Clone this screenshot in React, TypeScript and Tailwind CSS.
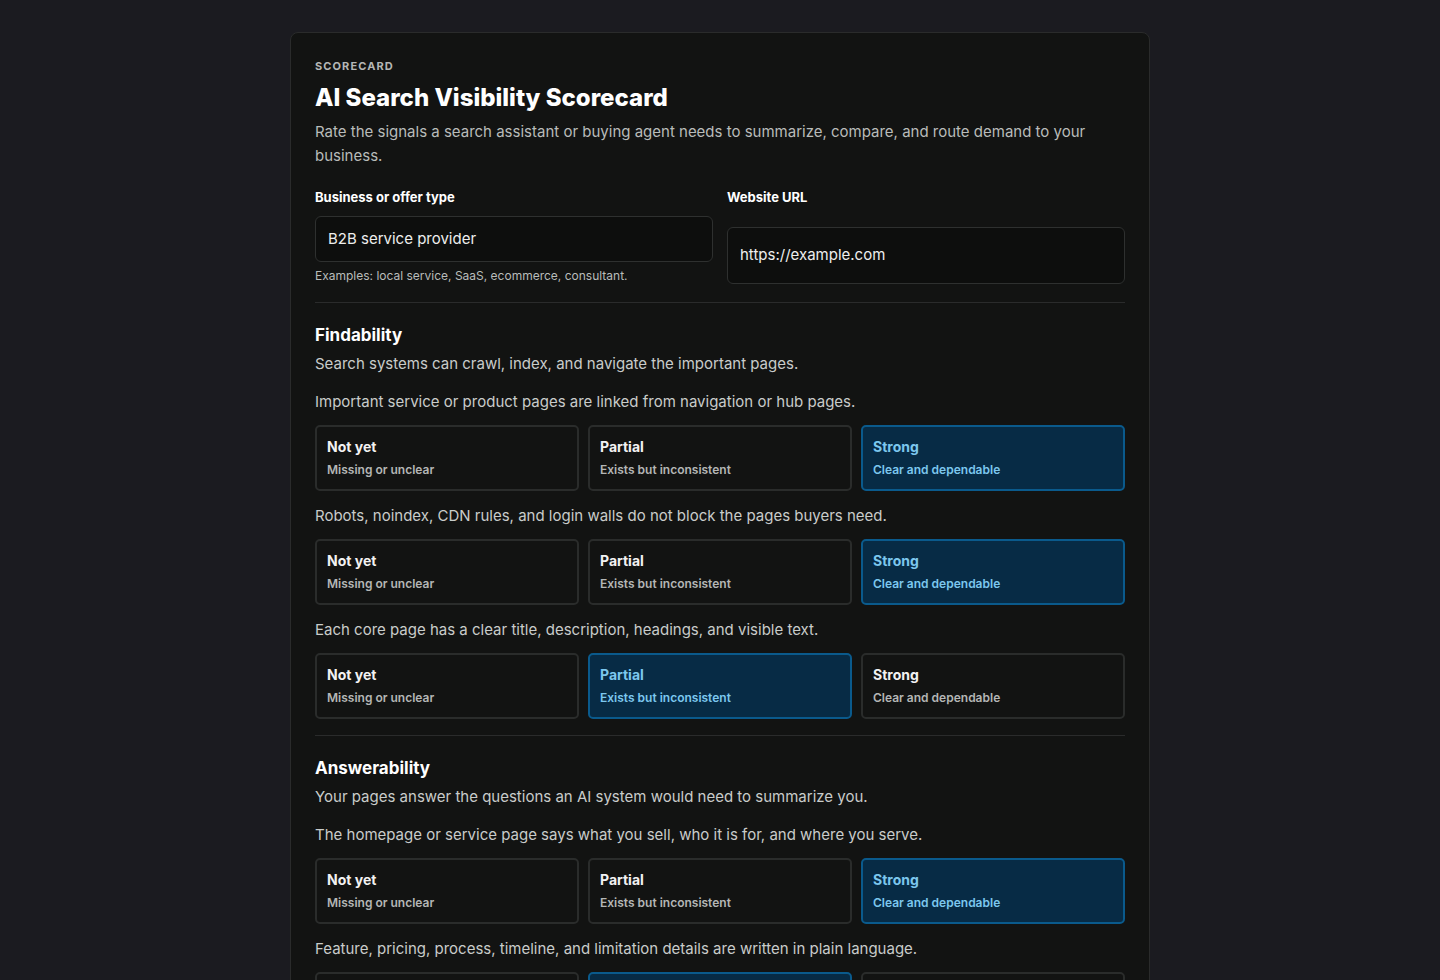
import React from "react";

type Q = { text: string; sel: number };
const opts = [
  ["Not yet", "Missing or unclear"],
  ["Partial", "Exists but inconsistent"],
  ["Strong", "Clear and dependable"],
];

function Question({ q }: { q: Q }) {
  return (
    <div className="flex flex-col gap-[12px]">
      <p className="text-[15px] text-[#c9ccca] leading-[22px]">{q.text}</p>
      <div className="grid grid-cols-3 gap-[9px]">
        {opts.map((o, i) => {
          const s = i === q.sel;
          return (
            <div
              key={i}
              className={`h-[66px] rounded-[5px] border-2 px-[10px] flex flex-col justify-center gap-[6px] ${
                s ? "bg-[#072b45] border-[#0a5a8c]" : "bg-[#121312] border-[#2a2c2b]"
              }`}
            >
              <div className={`text-[14px] font-bold leading-[18px] ${s ? "text-[#7cc7ee]" : "text-[#f2f2f2]"}`}>{o[0]}</div>
              <div className={`text-[12px] font-semibold leading-[16px] ${s ? "text-[#7cc7ee]" : "text-[#b4b6b5]"}`}>{o[1]}</div>
            </div>
          );
        })}
      </div>
    </div>
  );
}

function Section({ title, desc, qs }: { title: string; desc: string; qs: Q[] }) {
  return (
    <div className="flex flex-col">
      <h2 className="text-[17px] font-bold text-white leading-[24px]">{title}</h2>
      <p className="mt-[6px] text-[15px] text-[#c9ccca] leading-[22px]">{desc}</p>
      <div className="mt-[16px] flex flex-col gap-[14px]">
        {qs.map((q, i) => (
          <Question key={i} q={q} />
        ))}
      </div>
    </div>
  );
}

export default function App() {
  return (
    <div className="min-h-[980px] bg-[#1b1b20] pt-[32px] flex justify-center" style={{ fontFamily: "Inter, 'Noto Sans', sans-serif" }}>
      <div className="w-[860px] bg-[#121312] border border-[#2a2b2b] rounded-t-[8px] px-[24px] pt-[26px] pb-[40px] self-start">
        <div className="text-[11px] font-bold tracking-[0.1em] text-[#b5b7b6] leading-[14px]">SCORECARD</div>
        <h1 className="mt-[10px] text-[24px] font-extrabold text-white leading-[30px]">AI Search Visibility Scorecard</h1>
        <p className="mt-[7px] text-[15px] text-[#b9bcba] leading-[24px]">
          Rate the signals a search assistant or buying agent needs to summarize, compare, and route demand to your business.
        </p>
        <div className="mt-[20px] grid grid-cols-2 gap-[14px]">
          <div className="flex flex-col">
            <label className="text-[13px] font-bold text-white leading-[18px]">Business or offer type</label>
            <div className="mt-[10px] h-[46px] rounded-[6px] border border-[#2e302f] bg-[#0d0e0d] px-[12px] flex items-center text-[15px] text-[#eee]">B2B service provider</div>
            <div className="mt-[6px] text-[12px] text-[#b9bcba] leading-[16px]">Examples: local service, SaaS, ecommerce, consultant.</div>
          </div>
          <div className="flex flex-col">
            <label className="text-[13px] font-bold text-white leading-[18px]">Website URL</label>
            <div className="mt-[21px] flex-1 rounded-[6px] border border-[#2e302f] bg-[#0d0e0d] px-[12px] flex items-center text-[15px] text-[#eee]">https://example.com</div>
          </div>
        </div>
        <div className="mt-[18px] border-t border-[#2a2b2b] pt-[20px]">
          <Section
            title="Findability"
            desc="Search systems can crawl, index, and navigate the important pages."
            qs={[
              { text: "Important service or product pages are linked from navigation or hub pages.", sel: 2 },
              { text: "Robots, noindex, CDN rules, and login walls do not block the pages buyers need.", sel: 2 },
              { text: "Each core page has a clear title, description, headings, and visible text.", sel: 1 },
            ]}
          />
        </div>
        <div className="mt-[16px] border-t border-[#2a2b2b] pt-[20px]">
          <Section
            title="Answerability"
            desc="Your pages answer the questions an AI system would need to summarize you."
            qs={[
              { text: "The homepage or service page says what you sell, who it is for, and where you serve.", sel: 2 },
              { text: "Feature, pricing, process, timeline, and limitation details are written in plain language.", sel: 1 },
            ]}
          />
        </div>
      </div>
    </div>
  );
}
